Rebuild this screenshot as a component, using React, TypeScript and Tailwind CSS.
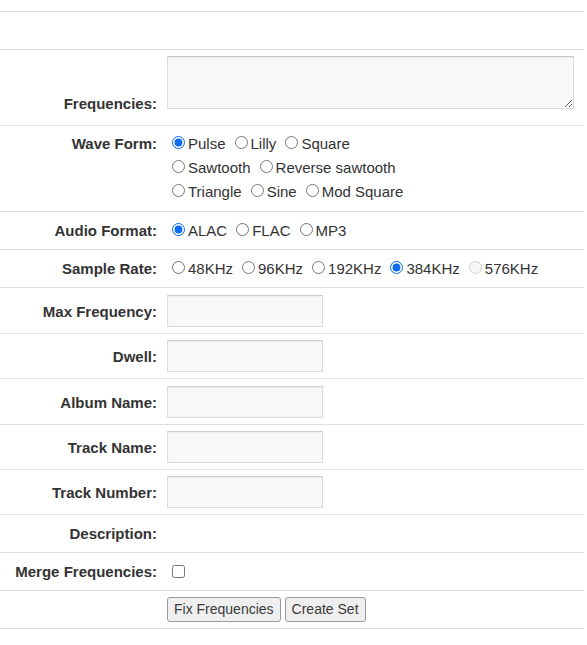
import React from 'react';

type Choice = { label: string; checked?: boolean; disabled?: boolean };

const waveLines: Choice[][] = [
  [{ label: 'Pulse', checked: true }, { label: 'Lilly' }, { label: 'Square' }],
  [{ label: 'Sawtooth' }, { label: 'Reverse sawtooth' }],
  [{ label: 'Triangle' }, { label: 'Sine' }, { label: 'Mod Square' }],
];

const formats: Choice[] = [{ label: 'ALAC', checked: true }, { label: 'FLAC' }, { label: 'MP3' }];

const rates: Choice[] = [
  { label: '48KHz' },
  { label: '96KHz' },
  { label: '192KHz' },
  { label: '384KHz', checked: true },
  { label: '576KHz', disabled: true },
];

// row heights alternate 46/45 in the original table
const textFields = [
  { label: 'Max Frequency:', rowClass: 'h-[46px]' },
  { label: 'Dwell:', rowClass: 'h-[45px]' },
  { label: 'Album Name:', rowClass: 'h-[46px]' },
  { label: 'Track Name:', rowClass: 'h-[45px]' },
  { label: 'Track Number:', rowClass: 'h-[45px]' },
];

const Radios: React.FC<{ name: string; items: Choice[] }> = ({ name, items }) => (
  <div className="whitespace-nowrap">
    {items.map((c) => (
      <label key={c.label} className="mr-[4px]">
        <input
          type="radio"
          name={name}
          defaultChecked={c.checked}
          disabled={c.disabled}
          className="ml-[5px] mr-[3px] mt-[3px] accent-[#0b6cf2]"
        />
        {c.label}
      </label>
    ))}
  </div>
);

const Label: React.FC<{ children?: React.ReactNode; className?: string }> = ({ children, className }) => (
  <div className={'w-[162px] shrink-0 pr-[5px] text-right font-bold ' + (className ?? '')}>{children}</div>
);

export default function App() {
  return (
    <div className="min-h-screen bg-white font-['Liberation_Sans',Arial,sans-serif] text-[15px] text-[#333]">
      <div className="mt-[11px] w-[584px] border-b border-[#ddd]">
        {/* empty header row */}
        <div className="h-[38px] border-t border-[#ddd]" />

        <div className="flex h-[76px] border-t border-[#ddd]">
          <Label className="self-end pb-[11px] leading-[21px]">Frequencies:</Label>
          <div className="pl-[5px] pt-[6px]">
            <textarea className="block h-[53px] w-[407px] border border-[#dcdcdc] border-t-[#c9c9c9] bg-[#f8f8f8] shadow-[inset_0_1px_1px_rgba(0,0,0,0.06)]" />
          </div>
        </div>

        <div className="flex h-[86px] border-t border-[#ddd] pt-[6px] leading-[24px]">
          <Label>Wave Form:</Label>
          <div className="pl-[5px]">
            {waveLines.map((line, i) => (
              <Radios key={i} name="wave" items={line} />
            ))}
          </div>
        </div>

        <div className="flex h-[38px] items-center border-t border-[#ddd] leading-[24px]">
          <Label>Audio Format:</Label>
          <div className="pl-[5px]">
            <Radios name="format" items={formats} />
          </div>
        </div>

        <div className="flex h-[38px] items-center border-t border-[#ddd] leading-[24px]">
          <Label>Sample Rate:</Label>
          <div className="pl-[5px]">
            <Radios name="rate" items={rates} />
          </div>
        </div>

        {textFields.map((f) => (
          <div key={f.label} className={'flex items-center border-t border-[#ddd] leading-[21px] ' + f.rowClass}>
            <Label className="pt-[1px]">{f.label}</Label>
            <div className="pl-[5px]">
              <input
                type="text"
                className="block h-[32px] w-[156px] border border-[#dcdcdc] border-t-[#cdcdcd] bg-[#f8f8f8] px-[4px] shadow-[inset_0_1px_1px_rgba(0,0,0,0.05)]"
              />
            </div>
          </div>
        ))}

        <div className="flex h-[38px] items-center border-t border-[#ddd] leading-[21px]">
          <Label>Description:</Label>
        </div>

        <div className="flex h-[38px] items-center border-t border-[#ddd] leading-[21px]">
          <Label>Merge Frequencies:</Label>
          <div className="flex items-center pl-[5px]">
            <input type="checkbox" className="ml-[5px] h-[13px] w-[13px]" />
          </div>
        </div>

        <div className="flex h-[38px] items-center border-t border-[#ddd]">
          <Label />
          <div className="flex gap-[4px] pl-[5px]">
            <button className="h-[25px] rounded-[3px] border border-[#9a9a9a] bg-[#efefef] px-[6px] text-[14px] leading-[23px] text-[#3a3a3a]">
              Fix Frequencies
            </button>
            <button className="h-[25px] rounded-[3px] border border-[#9a9a9a] bg-[#efefef] px-[6px] text-[14px] leading-[23px] text-[#3a3a3a]">
              Create Set
            </button>
          </div>
        </div>
      </div>
    </div>
  );
}
